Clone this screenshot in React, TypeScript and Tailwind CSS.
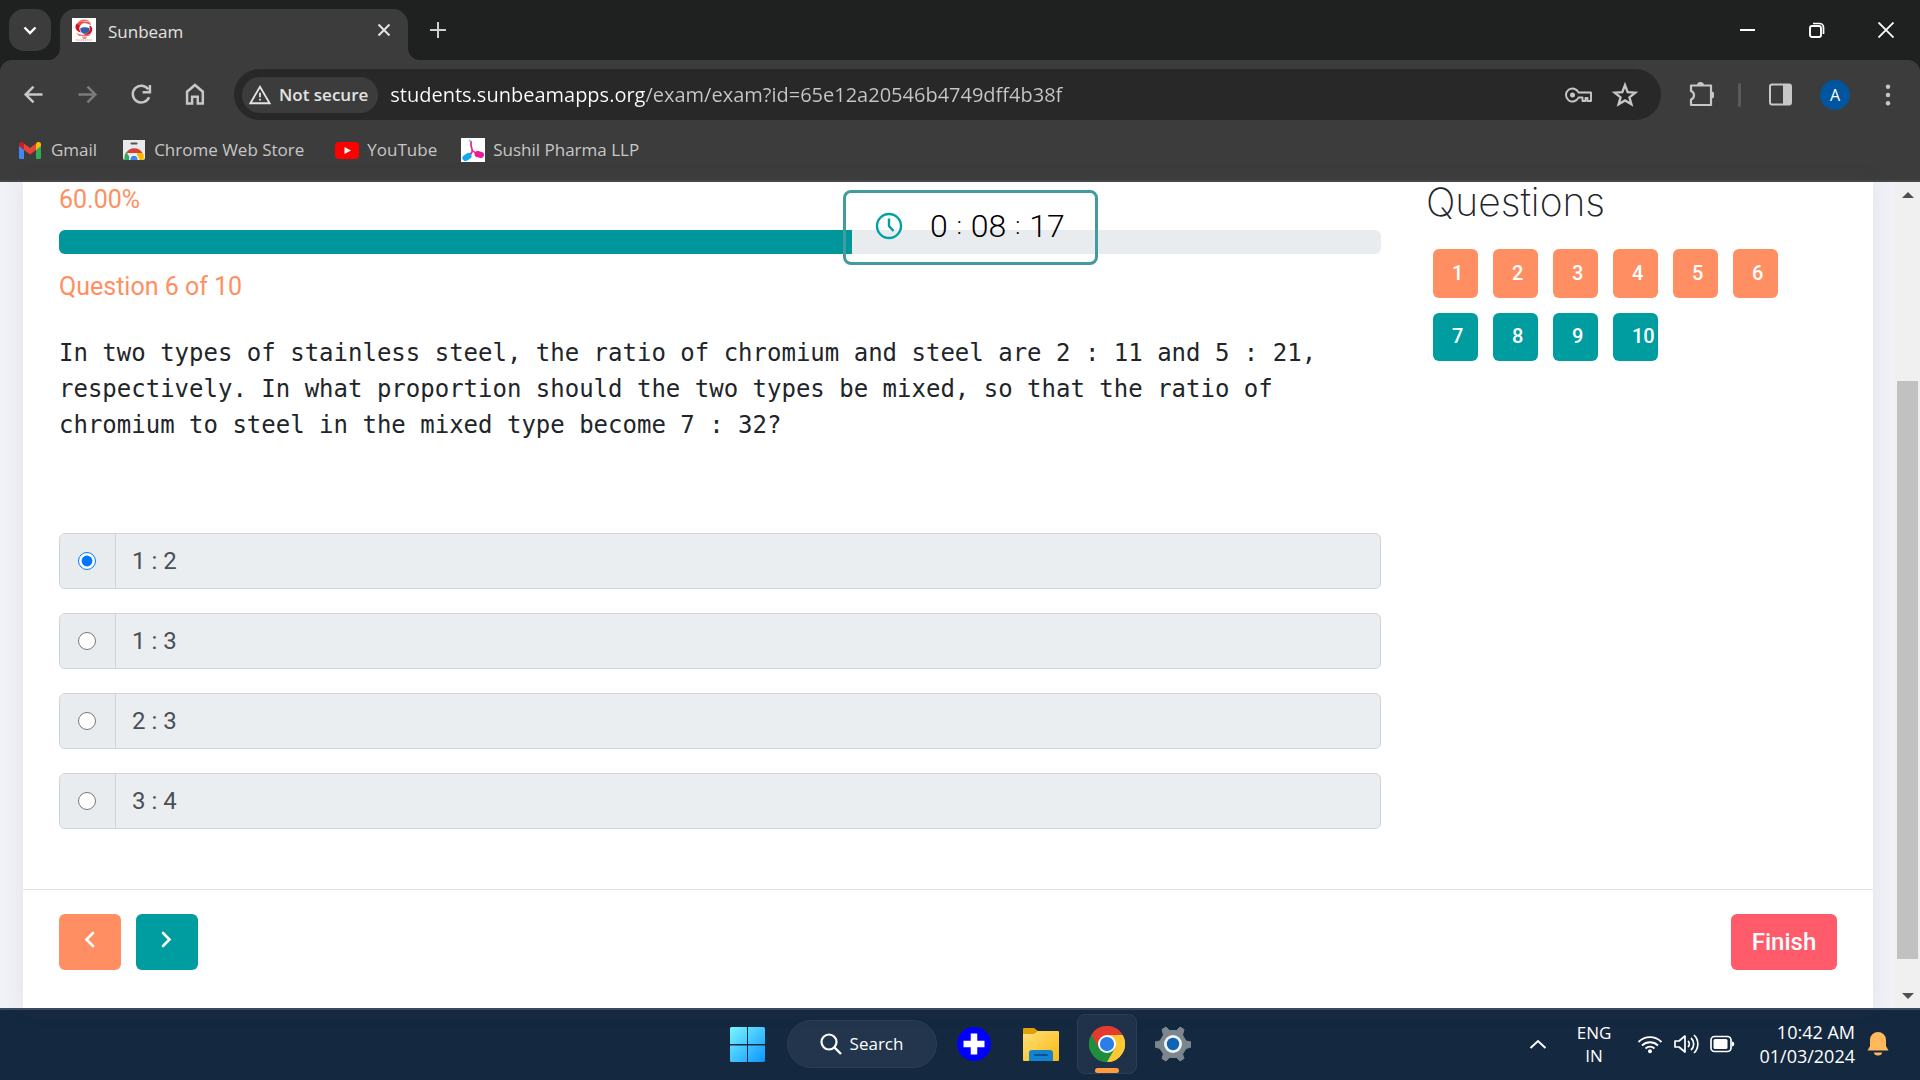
import { useState } from "react";
import type { ReactNode } from "react";

function Icon({ size = 24, children, className = "", box = 24 }: { size?: number; box?: number; children: ReactNode; className?: string }) {
  return (
    <svg width={size} height={size} viewBox={`0 0 ${box} ${box}`} className={`shrink-0 ${className}`} fill="none" aria-hidden="true">
      {children}
    </svg>
  );
}

function ChromeLogo({ size }: { size: number }) {
  return (
    <Icon size={size} box={48}>
      <path d="M24 24 3.2 12A24 24 0 0 1 44.8 12Z" fill="#e33b2e" />
      <path d="M24 24 44.8 12A24 24 0 0 1 24 48Z" fill="#fcc934" />
      <path d="M24 24 24 48A24 24 0 0 1 3.2 12Z" fill="#1e8e3e" />
      <path d="M24 12H44.8A24 24 0 0 1 24 48L34.4 30Z" fill="#fcc934" />
      <path d="M13.6 30 3.2 12A24 24 0 0 1 44.8 12H24Z" fill="#e33b2e" />
      <path d="M34.4 30 24 48A24 24 0 0 1 3.2 12L13.6 30Z" fill="#1e8e3e" />
      <circle cx="24" cy="24" r="12" fill="#fff" />
      <circle cx="24" cy="24" r="9.5" fill="#2b7de9" />
    </Icon>
  );
}

function TabStrip() {
  return (
    <header className="flex h-[60px] items-stretch bg-[#1f2120] pl-[9px]">
      <button aria-label="Search tabs" className="mt-[9px] flex size-[42px] items-center justify-center rounded-[15px] bg-[#3c3c3c] text-white">
        <Icon size={24}>
          <path d="m6.500 9.500 5.500 5.500 5.500-5.500" stroke="currentColor" strokeWidth="2.400" />
        </Icon>
      </button>
      <div className="relative mt-[9px] ml-[9px] flex w-[348px] items-center rounded-t-[15px] bg-[#3c3c3c] pr-[14px] pb-[9px] pl-3">
        <svg className="absolute bottom-0 -left-3" width="12" height="12" aria-hidden="true">
          <path d="M12 0V12H0A12 12 0 0 0 12 0Z" fill="#3c3c3c" />
        </svg>
        <svg className="absolute -right-3 bottom-0" width="12" height="12" aria-hidden="true">
          <path d="M0 0V12H12A12 12 0 0 1 0 0Z" fill="#3c3c3c" />
        </svg>
        <Icon size={24}>
          <rect width="24" height="24" fill="#fff" />
          <path d="M6.500 4C8 1 15 .5 18 4c-2.500-.8-5-.8-7-.2-2 .6-3.500 1-4.500.2Z" fill="#ee736b" />
          <path d="M6.500 4.500C3 6 2.500 10 5 12.500c1.500 1.500 4 2 6 2.500L9 10 10 5Z" fill="#cf1518" />
          <path d="M5 5.500c2-2 8-3 13-1l1 2.500c-3-2-9-2.500-12 .5Z" fill="#e8534c" />
          <path d="M17.500 7.500c3.500 1 3.500 5.500 1 8-2 1.800-5 1.800-7 .8 3-1 5.500-4 6-8.800Z" fill="#d2181b" />
          <path d="M4 14.500c3 2.500 11 3.500 15.500 1L17 18H7Z" fill="#ee736b" />
          <circle cx="12.500" cy="10.500" r="5.200" fill="#fff" />
          <path d="M8.200 10.500c2-1.500 6.500-1.500 9-.5a4.500 4.500 0 0 1-8.700 2.500Z" fill="#2f5fae" />
          <path d="M10 18.500h5l-1 2.500h-3Z" fill="#f0928c" />
          <path d="M4 22h16" stroke="#ecb0ad" strokeWidth="1.400" strokeDasharray="1.500 .7" />
        </Icon>
        <span className="ml-3 flex-1 pt-[3px] text-[17px] text-[#e3e3e3]">Sunbeam</span>
        <button aria-label="Close tab" className="text-[#e3e3e3]">
          <Icon size={20} box={20}>
            <path d="m4.500 4.500 11 11m0-11-11 11" stroke="currentColor" strokeWidth="2" />
          </Icon>
        </button>
      </div>
      <button aria-label="New tab" className="ml-[19px] self-center text-[#d0d0d0]">
        <Icon size={22} box={22}>
          <path d="M11 3v16M3 11h16" stroke="currentColor" strokeWidth="2" />
        </Icon>
      </button>
      <div className="flex-1" />
      <div className="flex items-center text-white">
        <button aria-label="Minimize" className="flex h-full w-[68px] items-center justify-center">
          <Icon size={16} box={16}>
            <path d="M0 8h15" stroke="currentColor" strokeWidth="2" />
          </Icon>
        </button>
        <button aria-label="Restore" className="flex h-full w-[69px] items-center justify-center">
          <Icon size={16} box={16}>
            <rect x="1" y="4" width="11" height="11" rx="2" stroke="currentColor" strokeWidth="1.900" />
            <path d="M4 1.500h6.500a4 4 0 0 1 4 4V12" stroke="currentColor" strokeWidth="1.700" />
          </Icon>
        </button>
        <button aria-label="Close" className="flex h-full w-[69px] items-center justify-center">
          <Icon size={16} box={16}>
            <path d="m.5.500 15 15m0-15-15 15" stroke="currentColor" strokeWidth="1.800" />
          </Icon>
        </button>
      </div>
    </header>
  );
}

function Toolbar() {
  return (
    <div className="bg-[#1f2120]">
      <div className="flex items-center rounded-t-xl bg-[#3c3c3c] pt-[9px] pr-[18px] pl-5 text-[#c7c7c7]">
        <nav className="flex w-[214px] items-center gap-[27px]">
          <button aria-label="Back">
            <Icon size={27}>
              <path d="M20 12H5m7-7-7 7 7 7" stroke="currentColor" strokeWidth="2.200" />
            </Icon>
          </button>
          <button aria-label="Forward" className="text-[#7b7b7b]">
            <Icon size={27}>
              <path d="M4 12h15m-7-7 7 7-7 7" stroke="currentColor" strokeWidth="2.200" />
            </Icon>
          </button>
          <button aria-label="Reload">
            <Icon size={27}>
              <path d="M18 7.500A7.500 7.500 0 1 0 18.700 14.500M19.500 3.500v6.500h-6.500" stroke="currentColor" strokeWidth="2.200" />
            </Icon>
          </button>
          <button aria-label="Home">
            <Icon size={27}>
              <path d="M4.500 20V9.500l7-6 7 6V20h-4.500v-6h-5v6Z" stroke="currentColor" strokeWidth="2.200" />
            </Icon>
          </button>
        </nav>
        <div className="flex h-[51px] flex-1 items-center rounded-full bg-[#282828] pr-[22px] pl-2">
          <button className="flex h-9 items-center gap-2 rounded-full bg-[#3c3c3c] pr-[10px] pl-[7px] text-[17px] font-semibold text-[#e3e3e3]">
            <Icon size={22}>
              <path d="M12 3 1.500 21h21Z" stroke="currentColor" strokeWidth="2" />
              <path d="M12 9.500v5m0 1.500v2" stroke="currentColor" strokeWidth="2" />
            </Icon>
            Not secure
          </button>
          <input
            aria-label="Address"
            className="ml-3 min-w-0 flex-1 bg-[linear-gradient(90deg,#ffffff_256px,#c7c7c7_256px)] bg-clip-text text-[20px] text-transparent outline-none"
            defaultValue="students.sunbeamapps.org/exam/exam?id=65e12a20546b4749dff4b38f"
          />
          <div className="flex items-center gap-[19px]">
            <button aria-label="Manage passwords">
              <svg width="28" height="16" viewBox="0 0 28 16" fill="none" aria-hidden="true">
                <path d="M14.500 5.500a6.500 6.500 0 1 0 0 5H18.500v3.500h3v-3h2v3H27V5.500Z" stroke="currentColor" strokeWidth="1.900" strokeLinejoin="round" />
                <circle cx="8.500" cy="8" r="2.500" fill="currentColor" />
              </svg>
            </button>
            <button aria-label="Bookmark this tab">
              <Icon size={28}>
                <path d="m12 3.500 2.300 6 6.500.500-5 4 1.700 6-5.500-3.300L6.500 20l1.700-6-5-4 6.500-.500Z" stroke="currentColor" strokeWidth="2" />
              </Icon>
            </button>
          </div>
        </div>
        <div className="flex items-center pl-7">
          <button aria-label="Extensions">
            <svg width="25" height="25" viewBox="0 0 25 25" fill="none" aria-hidden="true">
              <path d="M2 3.500h20V23H2v-5.500c4-1.500 4-7 0-8.500Z" stroke="currentColor" strokeWidth="2.200" strokeLinejoin="round" />
              <path d="M8 3.500a3.500 3.500 0 0 1 7 0ZM22 9.500a3.500 3.500 0 0 1 0 7Z" fill="currentColor" />
            </svg>
          </button>
          <span className="ml-6 h-6 w-[3px] rounded bg-[#5a5a5a]" />
          <button aria-label="Side panel" className="ml-7">
            <Icon size={23} box={23}>
              <rect x="1" y="1.500" width="21" height="20" rx="2" stroke="currentColor" strokeWidth="2" />
              <path d="M14 1h6a2 2 0 0 1 2 2v17a2 2 0 0 1-2 2h-6Z" fill="currentColor" />
            </Icon>
          </button>
          <button aria-label="Profile" className="ml-7 flex size-[30px] items-center justify-center rounded-full bg-[#00569e] text-[16px] text-white">
            A
          </button>
          <button aria-label="Menu" className="ml-6">
            <Icon size={28}>
              <circle cx="12" cy="5" r="1.900" fill="currentColor" />
              <circle cx="12" cy="12" r="1.900" fill="currentColor" />
              <circle cx="12" cy="19" r="1.900" fill="currentColor" />
            </Icon>
          </button>
        </div>
      </div>
    </div>
  );
}

function Bookmarks() {
  return (
    <nav className="flex h-[62px] items-center border-b-2 border-[#474747] bg-[#3c3c3c] pl-[18px] text-[17px] text-[#c7c7c7]">
      <a href="#gmail" className="flex items-center gap-[9px]">
        <svg width="24" height="17" viewBox="0 0 24 17" aria-hidden="true">
          <path d="M1 3v12.500A1.500 1.500 0 0 0 2.500 17H6V6Z" fill="#4285f4" />
          <path d="M18 17h3.500a1.500 1.500 0 0 0 1.500-1.500V3l-5 3Z" fill="#34a853" />
          <path d="M18 2v6l5-4V2.500C23 .3 20.500-.8 18.700.500Z" fill="#fbbc04" />
          <path d="M6 8V1.500l6 4.500 6-4.500V8l-6 4.500Z" fill="#ea4335" />
          <path d="M1 2.500V4l5 4V1.500L5.300.800C3.500-.8 1 .3 1 2.500Z" fill="#c5221f" />
        </svg>
        Gmail
      </a>
      <a href="#webstore" className="ml-[26px] flex items-center gap-[9px]">
        <svg width="22" height="20" viewBox="0 0 22 20" aria-hidden="true">
          <path d="M0 0h22v18a2 2 0 0 1-2 2H2a2 2 0 0 1-2-2Z" fill="#e8eaed" />
          <rect x="7.500" y="2.500" width="7" height="2" rx="1" fill="#555" />
          <path d="M3 13a9.500 9.500 0 0 1 16.500 0H11Z" fill="#d93f33" />
          <path d="M3.500 12 8 20H1.500C1 17 1.500 14 3.500 12Z" fill="#34a853" />
          <path d="M14 13h6c1 2 1 5 .5 7H14Z" fill="#fbbc04" />
          <path d="M6 20a5 5.500 0 0 1 10 0Z" fill="#fff" />
          <path d="M7.300 20a3.700 4.300 0 0 1 7.400 0Z" fill="#4285f4" />
        </svg>
        Chrome Web Store
      </a>
      <a href="#youtube" className="ml-[31px] flex items-center gap-2">
        <svg width="24" height="17" viewBox="0 0 24 17" aria-hidden="true">
          <rect width="24" height="17" rx="4" fill="#f00" />
          <path d="M9.500 5v7l6.500-3.500Z" fill="#fff" />
        </svg>
        YouTube
      </a>
      <a href="#sushil" className="ml-6 flex items-center gap-2">
        <Icon size={24}>
          <rect width="24" height="24" fill="#fff" />
          <path d="M10 3v4c0 3 2 4 1 7l-2 3" stroke="#e91e8c" strokeWidth="1.700" />
          <circle cx="9" cy="2.700" r="1.300" fill="#7ed0ee" />
          <path d="m12 13 4 3" stroke="#e91e8c" strokeWidth="1.500" />
          <path d="m4.500 20 3-2" stroke="#12a8ee" strokeWidth="6" strokeLinecap="round" />
          <path d="m16.500 16 3.500 1" stroke="#ee1b96" strokeWidth="6" strokeLinecap="round" />
        </Icon>
        Sushil Pharma LLP
      </a>
    </nav>
  );
}

const options = ["1 : 2", "1 : 3", "2 : 3", "3 : 4"];

function Exam() {
  const [choice, setChoice] = useState("1 : 2");
  return (
    <main className="relative flex flex-1 bg-[#f1f2f7] pl-[23px] font-['Roboto',sans-serif]">
      <section className="flex min-w-0 flex-1 flex-col bg-white shadow-[0_0_20px_rgba(90,90,130,0.10)]">
        <div className="flex gap-[45px] px-9 pb-[60px]">
          <div className="min-w-0 flex-1">
            <p className="text-[25px] leading-9 text-[#ff8f62]">60.00%</p>
            <div role="progressbar" aria-label="Exam progress" aria-valuenow={60} className="mt-3 h-6 overflow-hidden rounded-md bg-[#e9ecef]">
              <div className="h-full w-3/5 bg-[#00969b]" />
            </div>
            <p className="mt-[15px] text-[25px] leading-9 text-[#ff8f62]">Question 6 of 10</p>
            <p className="mt-[30px] font-['DejaVu_Sans_Mono',monospace] text-2xl leading-9 text-[#212529]">
              In two types of stainless steel, the ratio of chromium and steel are 2 : 11 and 5 : 21, respectively. In what proportion
              should the two types be mixed, so that the ratio of chromium to steel in the mixed type become 7 : 32?
            </p>
            <div className="mt-[90px] flex flex-col gap-6">
              {options.map((o) => (
                <label key={o} className="flex h-14 items-stretch overflow-hidden rounded-md border border-[#ced4da] bg-[#ebeef1] text-2xl text-[#495057]">
                  <span className="flex w-14 items-center justify-center border-r border-[#ced4da] bg-[#e9ecef] pr-px">
                    <input type="radio" name="answer" className="size-[18px] accent-[#0075ff]" checked={choice === o} onChange={() => setChoice(o)} />
                  </span>
                  <span className="flex items-center pl-4">{o}</span>
                </label>
              ))}
            </div>
          </div>
          <aside className="w-[411px]">
            <h2 className="pt-0.5 font-['Inter',sans-serif] text-[39px] leading-9 font-extralight text-[#212529]">Questions</h2>
            <div className="mt-[29px] ml-[7px] grid grid-cols-[repeat(6,45px)] gap-[15px]">
              {[1, 2, 3, 4, 5, 6, 7, 8, 9, 10].map((n) => (
                <button
                  key={n}
                  className={
                    n <= 6
                      ? "h-[49px] rounded-md bg-[#ff8f62] pb-0.5 pl-[19px] text-left text-xl font-medium text-white"
                      : "h-12 rounded-md bg-[#009da0] pb-0.5 pl-[19px] text-left text-xl font-medium text-white"
                  }
                >
                  {n}
                </button>
              ))}
            </div>
          </aside>
        </div>
        <footer className="flex items-center border-t border-[#dee2e6] px-9 pt-6 pb-[38px]">
          <button aria-label="Previous question" className="flex h-14 w-[62px] items-center justify-center rounded-md bg-[#ff8f62] pb-[7px] text-white">
            <Icon size={20} box={20}>
              <path d="m13 4-6.500 6.500L13 17" stroke="currentColor" strokeWidth="2.600" strokeLinecap="round" />
            </Icon>
          </button>
          <button aria-label="Next question" className="ml-[15px] flex h-14 w-[62px] items-center justify-center rounded-md bg-[#009da0] pb-[7px] text-white">
            <Icon size={20} box={20}>
              <path d="m6 4 6.500 6.500L6 17" stroke="currentColor" strokeWidth="2.600" strokeLinecap="round" />
            </Icon>
          </button>
          <button className="ml-auto h-14 w-[106px] rounded-md bg-[#ff5b6b] text-2xl font-medium text-white">Finish</button>
        </footer>
      </section>
      <div className="absolute top-2 left-[843px] flex h-[75px] w-[255px] items-center rounded-lg border-3 border-[#429c9f] pb-1 pl-7 text-black">
        <Icon size={30} box={30} className="text-[#00a0a3]">
          <circle cx="15" cy="15" r="12" stroke="currentColor" strokeWidth="2.400" />
          <path d="M15 7.500V15l4.500 5" stroke="currentColor" strokeWidth="2.400" />
        </Icon>
        <time className="ml-[26px] flex items-center gap-[9px] text-[32px] leading-10 font-light">
          <span>0</span>
          <span className="text-2xl">:</span>
          <span>08</span>
          <span className="text-2xl">:</span>
          <span>17</span>
        </time>
      </div>
      <div className="w-[22px]" />
      <div className="flex w-[25px] flex-col items-center justify-between bg-[#f0f0f0] pt-[9px] pb-2" aria-hidden="true">
        <svg width="12" height="8">
          <path d="M6 1 12 7H0Z" fill="#505050" />
        </svg>
        <div className="mt-[182px] mb-[33px] w-[21px] flex-1 bg-[#c1c1c1]" />
        <svg width="12" height="8">
          <path d="M6 7 0 1h12Z" fill="#505050" />
        </svg>
      </div>
    </main>
  );
}

function Taskbar() {
  return (
    <footer className="grid h-[72px] grid-cols-[1fr_auto_1fr] items-center border-t-2 border-[#3a495b] bg-[#14283f] pb-0.5 text-[17px] text-white">
      <div />
      <div className="flex h-full items-center">
        <button aria-label="Start" className="flex w-[35px] justify-center">
          <Icon size={35} box={35}>
            <defs>
              <linearGradient id="win" x1="0" y1="0" x2="1" y2="1">
                <stop offset="0" stopColor="#7af6ff" />
                <stop offset="1" stopColor="#0a95ff" />
              </linearGradient>
            </defs>
            <path d="M1.500 0H17v17H0V1.500A1.500 1.500 0 0 1 1.500 0ZM18 0h15.500A1.500 1.500 0 0 1 35 1.500V17H18ZM0 18.500h17V35H1.500A1.500 1.500 0 0 1 0 33.500ZM18 18.500h17v15a1.500 1.500 0 0 1-1.500 1.500H18Z" fill="url(#win)" />
          </Icon>
        </button>
        <button className="ml-[22px] flex h-12 w-[150px] items-center justify-center gap-2 rounded-full border border-[#2b3d53] bg-[#22354c]">
          <Icon size={22} box={22}>
            <circle cx="9" cy="9" r="7.500" stroke="currentColor" strokeWidth="2.200" />
            <path d="m14.500 14.500 6.500 6.500" stroke="currentColor" strokeWidth="2.400" />
          </Icon>
          Search
        </button>
        <button aria-label="Add" className="ml-5">
          <Icon size={34} box={34}>
            <circle cx="17" cy="17" r="17" fill="#00f" />
            <path d="M17 6.500v21M6.500 17h21" stroke="#fff" strokeWidth="6.500" />
          </Icon>
        </button>
        <button aria-label="File Explorer" className="ml-[31px]">
          <svg width="37" height="34" viewBox="0 0 37 34" aria-hidden="true">
            <defs>
              <linearGradient id="fold" x1="0" y1="0" x2="1" y2="1">
                <stop offset="0" stopColor="#ffe07a" />
                <stop offset="1" stopColor="#fbb910" />
              </linearGradient>
            </defs>
            <path d="M1 2a1 1 0 0 1 1-1h10l4 3v4H1Z" fill="#dfa00a" />
            <path d="M1 7h11l4-3h20a1 1 0 0 1 1 1v28a1 1 0 0 1-1 1H2a1 1 0 0 1-1-1Z" fill="url(#fold)" />
            <path d="M7 34V26a3 3 0 0 1 3-3h18a3 3 0 0 1 3 3v8Z" fill="#1283cf" />
            <rect x="12" y="27" width="14" height="2" rx="1" fill="#0a5290" />
          </svg>
        </button>
        <button aria-label="Google Chrome" className="relative ml-[18px] flex size-[60px] items-center justify-center rounded-lg border border-[#2d3e53] bg-[#1f3249]">
          <ChromeLogo size={36} />
          <span className="absolute bottom-0 h-[5px] w-6 rounded-full bg-[#ff9c42]" />
        </button>
        <button aria-label="Settings" className="ml-[18px]">
          <Icon size={36} box={36}>
            <path
              d="M7 3.500 11 1l3.500 3.500h7L25 1l4 2.500L27.500 9l3.500 6 5 1v5l-5 1.500L27.500 28l1.500 4.500-4 2.500-3.500-3.500h-7L11 35l-4-2.500L8.500 28 5 22.500 0 21v-5l5-1 3.500-6Z"
              fill="#7c868f"
              stroke="#7c868f"
              strokeLinejoin="round"
            />
            <circle cx="18" cy="18" r="9" fill="#f2f3f5" />
            <circle cx="18" cy="18" r="6.200" fill="#0d65b5" />
          </Icon>
        </button>
      </div>
      <div className="flex items-center justify-end pr-[31px]">
        <button aria-label="Show hidden icons">
          <Icon size={18} box={18}>
            <path d="m1.500 13 7.500-7 7.500 7" stroke="currentColor" strokeWidth="2" />
          </Icon>
        </button>
        <button className="ml-[30px] text-center leading-[23px]">
          ENG
          <br />
          IN
        </button>
        <button aria-label="Network, sound, battery" className="ml-[26px] flex items-center gap-[11px]">
          <svg width="26" height="20" viewBox="0 0 26 20" fill="none" stroke="currentColor" strokeWidth="1.800" aria-hidden="true">
            <path d="M1.500 8a16 16 0 0 1 23 0M5 11.500a11.500 11.500 0 0 1 16 0M8.500 14.500a6.500 6.500 0 0 1 9 0" />
            <circle cx="13" cy="17.300" r="2" fill="currentColor" stroke="none" />
          </svg>
          <svg width="25" height="22" viewBox="0 0 25 22" fill="none" stroke="currentColor" strokeWidth="1.700" aria-hidden="true">
            <path d="M1 8v6h4l6 5V3L5 8Z" strokeLinejoin="round" />
            <path d="M14 8a4 4 0 0 1 0 6M17 5a8 8 0 0 1 0 12M20 2a12.500 12.500 0 0 1 0 18" />
          </svg>
          <svg width="25" height="18" viewBox="0 0 25 18" fill="none" aria-hidden="true">
            <rect x="1" y="1.500" width="20" height="15" rx="3.500" stroke="currentColor" strokeWidth="1.700" />
            <rect x="3.500" y="4" width="14" height="10" rx="1.500" fill="currentColor" />
            <path d="M22 6.500c3 0 3 5 0 5Z" fill="currentColor" />
          </svg>
        </button>
        <button className="ml-6 text-right text-lg leading-6">
          10:42 AM
          <br />
          01/03/2024
        </button>
        <button aria-label="Notifications" className="ml-3">
          <svg width="22" height="24" viewBox="0 0 22 24" fill="#ffb85c" aria-hidden="true">
            <path d="M11 0a8 8 0 0 0-8 8v6l-2.500 4.500h21L19 14V8a8 8 0 0 0-8-8ZM7 20.500h8a4 3 0 0 1-8 0Z" />
          </svg>
        </button>
      </div>
    </footer>
  );
}

export default function App() {
  return (
    <div className="flex min-h-screen flex-col font-['Open_Sans','Noto_Sans',sans-serif]">
      <TabStrip />
      <Toolbar />
      <Bookmarks />
      <Exam />
      <Taskbar />
    </div>
  );
}
